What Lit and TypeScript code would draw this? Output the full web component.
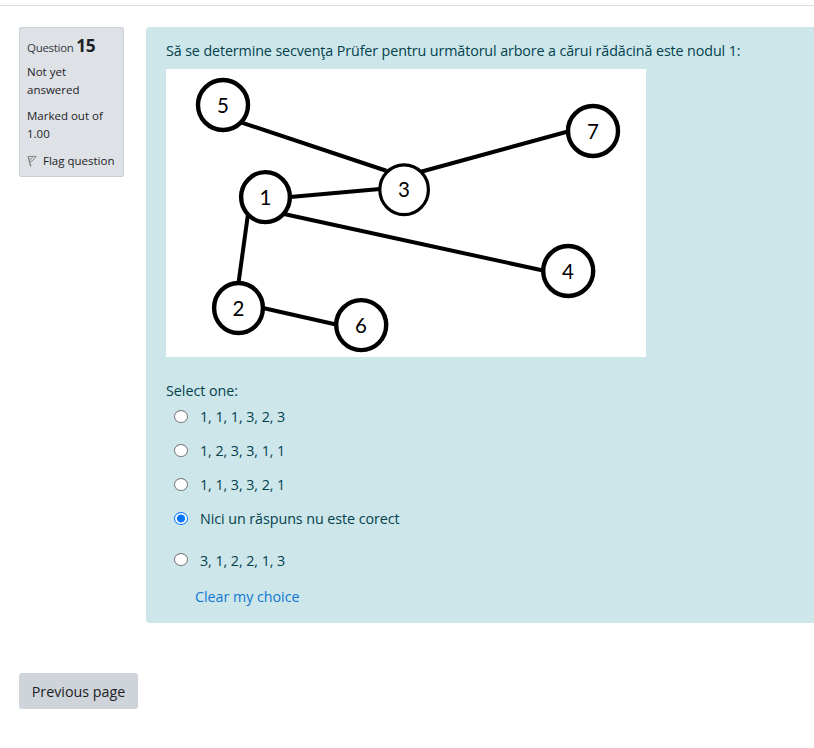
import { LitElement, html, svg, css } from "lit";
import { customElement, state } from "lit/decorators.js";

interface GraphNode { label: string; x: number; y: number; rx: number; ry: number; w: number; }

const NODES: GraphNode[] = [
  { label: "5", x: 57, y: 36, rx: 25, ry: 25, w: 4.4 },
  { label: "1", x: 99.5, y: 128.1, rx: 24.4, ry: 25, w: 4.4 },
  { label: "3", x: 238.1, y: 120.7, rx: 24.3, ry: 24.9, w: 3.2 },
  { label: "7", x: 427, y: 62, rx: 25, ry: 25, w: 4.4 },
  { label: "4", x: 402.2, y: 202, rx: 25, ry: 25, w: 4.4 },
  { label: "2", x: 72.5, y: 239, rx: 24.4, ry: 25, w: 4.4 },
  { label: "6", x: 195.2, y: 256.1, rx: 25, ry: 25, w: 4.4 },
];

const EDGES: number[][] = [
  [75, 53.3, 221, 102],
  [254, 103, 402, 62.5],
  [124, 128, 214, 120],
  [118, 145, 377, 201.5],
  [82, 145, 72.5, 214],
  [97, 239, 170, 255.5],
];

@customElement("tree-graph")
export class TreeGraph extends LitElement {
  static styles = css`
    :host { display: block; width: 480px; height: 288px; background: #fff; }
    svg { display: block; }
    .edge { stroke: #000; stroke-width: 4; }
    .node { fill: #fff; stroke: #000; }
    .label { font: 20.5px Lato, sans-serif; text-anchor: middle; fill: #000; }
  `;
  render() {
    return html`<svg width="480" height="288" viewBox="0 0 480 288">
      ${EDGES.map(([a, b, c, d]) => svg`<line class="edge" x1=${a} y1=${b} x2=${c} y2=${d}></line>`)}
      ${NODES.map((n) => svg`
        <ellipse class="node" cx=${n.x} cy=${n.y} rx=${n.rx} ry=${n.ry} stroke-width=${n.w}></ellipse>
        <text class="label" x=${n.x - 0.2} y=${n.y + 7.7}>${n.label}</text>`)}
    </svg>`;
  }
}

@customElement("app-root")
export class AppRoot extends LitElement {
  @state() private selected = 3;

  private answers = [
    "1, 1, 1, 3, 2, 3",
    "1, 2, 3, 3, 1, 1",
    "1, 1, 3, 3, 2, 1",
    "Nici un răspuns nu este corect",
    "3, 1, 2, 2, 1, 3",
  ];

  static styles = css`
    :host {
      display: block;
      height: 748px;
      box-sizing: border-box;
      overflow: hidden;
      background: #fff;
      color: #1d2125;
      font: 14.3px/22px "Open Sans", "Noto Sans", sans-serif;
      letter-spacing: -0.11px;
      padding-top: 5px;
    }
    * { box-sizing: border-box; }
    .rule { height: 1px; background: #dcdddf; }
    .question { display: flex; align-items: flex-start; gap: 22px; padding: 21px 0 0 19px; }
    .info {
      flex: none; width: 105px; height: 150px; padding: 7px 7px 0;
      background: #dee2e6; border: 1px solid #cad0d7; border-radius: 2px;
      font-size: 11.5px; line-height: 18px; letter-spacing: 0; white-space: nowrap;
    }
    .number { line-height: 22px; height: 22px; margin-bottom: 6px; color: #343a40; letter-spacing: -0.3px; }
    .number b { font-size: 17.3px; line-height: 22px; color: #1d2125; }
    .state, .grade { margin-bottom: 8px; }
    .flag { display: flex; align-items: center; gap: 5px; margin-top: 9px; }
    .flag svg { flex: none; }
    .content {
      flex: 1; height: 596px; padding: 13px 0 0 20px;
      background: #cce6ea; color: #04414d; border-radius: 4px 0 0 4px; white-space: nowrap;
    }
    .prompt { height: 22px; margin-bottom: 7px; }
    .select { margin-top: 23px; height: 22px; letter-spacing: -0.02px; }
    .answer {
      display: flex; align-items: flex-start; height: 22px; margin: 4px 0 12px 8px; gap: 12px;
      letter-spacing: -0.06px; cursor: pointer;
    }
    .answer + .answer { margin-top: 0; }
    .answer.long { margin-bottom: 20px; }
    .radio {
      appearance: none; flex: none; width: 14px; height: 13px; margin: 4px 0 0;
      border: 1px solid #767676; border-radius: 50%; background: #fff;
    }
    .answer.long + .answer .radio { margin-top: 3px; }
    .radio:checked { border-color: #0075ff; background: radial-gradient(circle, #0075ff 3.7px, #fff 4.3px); }
    .clear {
      display: block; width: max-content; margin: 14px 0 0 29px;
      color: #1177d1; text-decoration: none; letter-spacing: -0.03px;
    }
    .previous {
      display: flex; align-items: center; justify-content: center; width: 119px; height: 36px;
      margin: 50px 0 0 19px; padding: 1px 0 0; border: 0; border-radius: 3px;
      background: #ced4da; color: #1d2125; font: inherit; letter-spacing: 0;
    }
  `;

  render() {
    return html`
      <div class="rule"></div>
      <main class="question">
        <aside class="info">
          <div class="number">Question <b>15</b></div>
          <div class="state">Not yet<br>answered</div>
          <div class="grade">Marked out of<br>1.00</div>
          <div class="flag">
            <svg width="11" height="12" viewBox="0 0 11 12" fill="none" stroke="#858585">
              <path d="M1 1.2 L3.8 11.5" stroke-width="1.4"></path>
              <path d="M1.5 1.5 L9.2 1.3 Q7.6 4.4 4.3 6.3 L2.8 6.5 M3 4.5 L5.6 2.6" stroke-width="1"></path>
            </svg>
            <span>Flag question</span>
          </div>
        </aside>
        <section class="content">
          <div class="prompt">Să se determine secvenţa Prüfer pentru următorul arbore a cărui rădăcină este nodul 1:</div>
          <tree-graph></tree-graph>
          <div class="select">Select one:</div>
          ${this.answers.map((a, i) => html`
            <label class="answer ${i === 3 ? "long" : ""}">
              <input class="radio" type="radio" name="answer" .checked=${this.selected === i}
                @change=${() => (this.selected = i)}>
              <span>${a}</span>
            </label>`)}
          <a class="clear">Clear my choice</a>
        </section>
      </main>
      <button class="previous">Previous page</button>
    `;
  }
}
